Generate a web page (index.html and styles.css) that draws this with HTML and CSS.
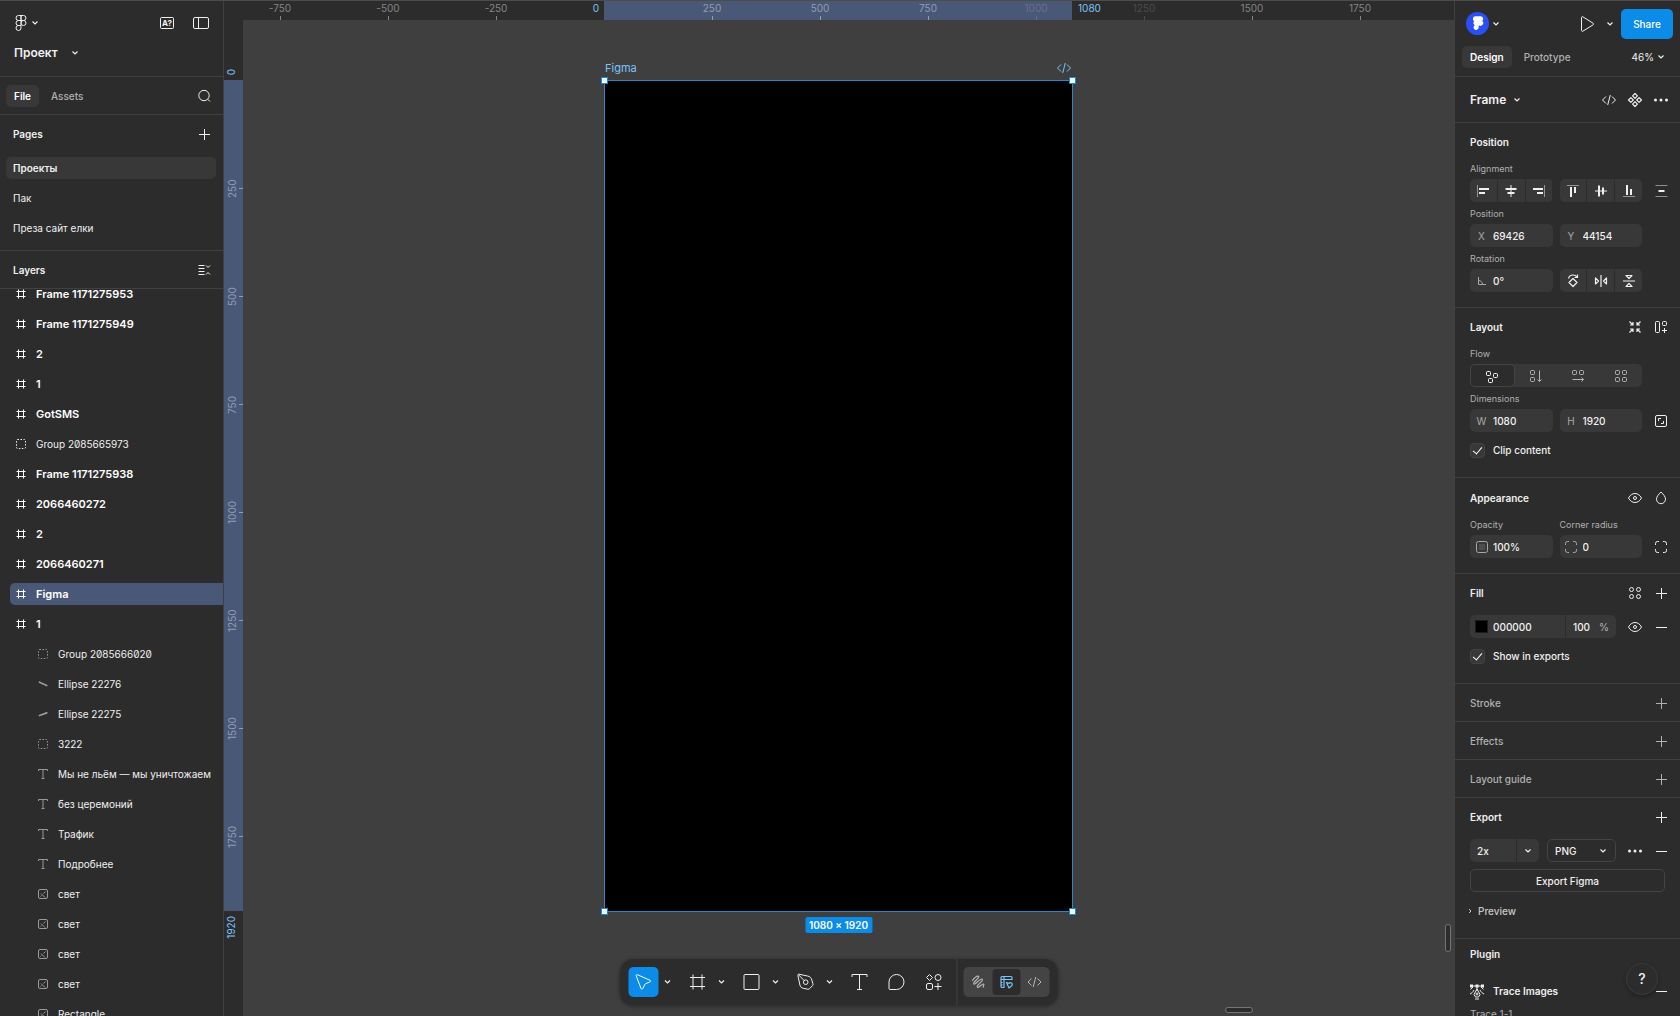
FILE: index.html
```html
<!DOCTYPE html>
<html lang="ru">
<head>
<meta charset="utf-8">
<meta name="viewport" content="width=device-width, initial-scale=1">
<title>Проект – Figma</title>
<link rel="stylesheet" href="styles.css">
</head>
<body>
<svg class="sprite" aria-hidden="true">
  <symbol id="i-chevron" viewBox="0 0 12 12"><path d="M3.500 4.500L6 7l2.500-2.500" stroke-width="1.200"/></symbol>
  <symbol id="i-chevron-right" viewBox="0 0 12 12"><path d="M5 4l2 2-2 2"/></symbol>
  <symbol id="i-figma" viewBox="0 0 24 24"><path d="M12 4.500H9.500a2.500 2.500 0 0 0 0 5H12zM12 4.500h2.500a2.500 2.500 0 0 1 0 5H12zM12 9.500H9.500a2.500 2.500 0 0 0 0 5H12zM12 14.500H9.500A2.500 2.500 0 1 0 12 17z"/><circle cx="14.500" cy="12" r="2.500"/></symbol>
  <symbol id="i-panel" viewBox="0 0 24 24"><rect x="4.500" y="6.500" width="15" height="11" rx="1.500"/><path d="M9.500 6.500v11"/></symbol>
  <symbol id="i-search" viewBox="0 0 24 24"><circle cx="12" cy="11.500" r="5.200"/><path d="M15.700 15.200l2.300 2.300"/></symbol>
  <symbol id="i-plus" viewBox="0 0 24 24"><path d="M12.500 7v11M7 12.500h11"/></symbol>
  <symbol id="i-minus" viewBox="0 0 24 24"><path d="M7 12.500h11"/></symbol>
  <symbol id="i-collapse" viewBox="0 0 24 24"><path d="M6.500 7.500h6M6.500 10.500h6M6.500 13.500h6M6.500 16.500h6M14 7.500l2 2 2-2M14 16.500l2-2 2 2"/></symbol>
  <symbol id="i-hash" viewBox="0 0 12 12"><path d="M3.500 1.500v9M8.500 1.500v9M1.500 3.500h9M1.500 8.500h9"/></symbol>
  <symbol id="i-group" viewBox="0 0 12 12"><rect x="1.500" y="1.500" width="9" height="9" rx="1" stroke-dasharray="1.500 1.500"/></symbol>
  <symbol id="i-ellipse-down" viewBox="0 0 12 12"><path d="M2.500 4.300l7.200 3.200" stroke-width="1.800" stroke-linecap="round"/></symbol>
  <symbol id="i-ellipse-up" viewBox="0 0 12 12"><path d="M2.500 7.500l7.200-2.700" stroke-width="1.800" stroke-linecap="round"/></symbol>
  <symbol id="i-text" viewBox="0 0 12 12"><path d="M1.500 3V1.500h9V3M6 1.500v9M4.500 10.500h3"/></symbol>
  <symbol id="i-image" viewBox="0 0 12 12"><rect x="1.500" y="1.500" width="9" height="9" rx="1.500"/><path d="M8 9.500L4 5.500M6.500 5.500l2-2M3.500 8.500l1-1"/></symbol>
  <symbol id="i-play" viewBox="0 0 24 24"><path d="M6.500 5.600v12.800c0 .9.600 1.200 1.300.8l10.200-6.300c.7-.4.700-1.300 0-1.700L7.800 4.800c-.7-.4-1.300-.1-1.300.8z"/></symbol>
  <symbol id="i-code" viewBox="0 0 24 24"><path d="M9 8.500L5.500 12 9 15.500M15 8.500l3.500 3.500-3.500 3.500M13.300 7l-2.600 10"/></symbol>
  <symbol id="i-component" viewBox="0 0 24 24"><path d="M12 5.500l2.400 2.400L12 10.300 9.600 7.900zM12 13.700l2.400 2.400L12 18.500l-2.400-2.400zM7.900 9.600l2.400 2.400-2.400 2.400L5.500 12zM16.100 9.600l2.400 2.400-2.400 2.400-2.400-2.400z" stroke-linejoin="round" stroke-width="1.200"/></symbol>
  <symbol id="i-dots" viewBox="0 0 24 24"><circle class="solid" cx="6.500" cy="12" r="1.500"/><circle class="solid" cx="12" cy="12" r="1.500"/><circle class="solid" cx="17.500" cy="12" r="1.500"/></symbol>
  <symbol id="i-al" viewBox="0 0 24 24"><path class="faint" d="M6.500 6v12"/><path class="thick" d="M8 10h10M8 14h6"/></symbol>
  <symbol id="i-ac" viewBox="0 0 24 24"><path d="M12 6v12"/><path class="thick" d="M6.500 10h11M8.500 14h7"/></symbol>
  <symbol id="i-ar" viewBox="0 0 24 24"><path class="faint" d="M17.500 6v12"/><path class="thick" d="M6 10h10M10 14h6"/></symbol>
  <symbol id="i-at" viewBox="0 0 24 24"><path class="faint" d="M6 6.500h12"/><path class="thick" d="M10 8v10M14 8v6"/></symbol>
  <symbol id="i-am" viewBox="0 0 24 24"><path d="M6 12h12"/><path class="thick" d="M10 6.500v11M14 8.500v7"/></symbol>
  <symbol id="i-ab" viewBox="0 0 24 24"><path class="faint" d="M6 17.500h12"/><path class="thick" d="M10 6v10M14 10v6"/></symbol>
  <symbol id="i-distribute" viewBox="0 0 24 24"><path class="faint" d="M6.500 6.500h12M6.500 17.500h12"/><path class="thick" d="M9.500 12h6"/></symbol>
  <symbol id="i-angle" viewBox="0 0 12 12"><path d="M2.500 2v7.500H10M2.500 5.500c2.300 0 4 1.700 4 4"/></symbol>
  <symbol id="i-rotate" viewBox="0 0 24 24"><path d="M12 9.500l4 4-4 4-4-4zM7.500 9.500C8 7.500 9.800 6 12 6c1.700 0 3.200.8 4 2M16.500 5.500v3h-3" stroke-linejoin="round" stroke-width="1.200"/></symbol>
  <symbol id="i-fliph" viewBox="0 0 24 24"><path d="M12 6v12M6.500 9v6l3-3zM17.500 9v6l-3-3z" stroke-linejoin="round" stroke-width="1.200"/></symbol>
  <symbol id="i-flipv" viewBox="0 0 24 24"><path d="M6 12h12M9 6.500h6l-3 3zM9 17.500h6l-3-3z" stroke-linejoin="round" stroke-width="1.200"/></symbol>
  <symbol id="i-fit" viewBox="0 0 24 24"><path d="M6.500 6.500l3.500 3.500M10 7v3H7M17.500 6.500L14 10M14 7v3h3M6.500 17.500L10 14M10 17v-3H7M17.500 17.500L14 14M14 17v-3h3" stroke-width="1.200"/></symbol>
  <symbol id="i-autolayout" viewBox="0 0 24 24"><rect x="6.500" y="6.500" width="4" height="11" rx="1"/><rect x="13.500" y="6.500" width="4" height="4" rx="1"/><path d="M15.500 13v5M13 15.500h5"/></symbol>
  <symbol id="i-flow-free" viewBox="0 0 24 24"><rect x="6.500" y="6.500" width="4" height="4" rx="1"/><rect x="13.500" y="8.500" width="4" height="4" rx="1"/><rect x="8.500" y="13.500" width="4" height="4" rx="1"/></symbol>
  <symbol id="i-flow-v" viewBox="0 0 24 24"><rect x="6.500" y="6.500" width="4" height="4" rx="1"/><rect x="6.500" y="13.500" width="4" height="4" rx="1"/><path d="M15.500 6.500v11M13.500 15.500l2 2 2-2"/></symbol>
  <symbol id="i-flow-h" viewBox="0 0 24 24"><rect x="6.500" y="6.500" width="4" height="4" rx="1"/><rect x="13.500" y="6.500" width="4" height="4" rx="1"/><path d="M6.500 15.500h11M15.500 13.500l2 2-2 2"/></symbol>
  <symbol id="i-flow-grid" viewBox="0 0 24 24"><rect x="6.500" y="6.500" width="4" height="4" rx="1"/><rect x="13.500" y="6.500" width="4" height="4" rx="1"/><rect x="6.500" y="13.500" width="4" height="4" rx="1"/><rect x="13.500" y="13.500" width="4" height="4" rx="1"/></symbol>
  <symbol id="i-ratio" viewBox="0 0 24 24"><rect x="6.500" y="6.500" width="11" height="11" rx="1.500"/><path d="M9.500 12V9.500H12M14.500 12v2.500H12"/></symbol>
  <symbol id="i-eye" viewBox="0 0 24 24"><path d="M5.500 12c1.500-2.900 3.800-4.500 6.500-4.500s5 1.600 6.500 4.500c-1.500 2.900-3.800 4.500-6.500 4.500S7 14.900 5.500 12z"/><circle cx="12" cy="12" r="1.500"/></symbol>
  <symbol id="i-drop" viewBox="0 0 24 24"><path d="M12 6c2.500 2.500 4.500 4.700 4.500 7.200a4.500 4.500 0 0 1-9 0C7.500 10.700 9.500 8.500 12 6z"/></symbol>
  <symbol id="i-opacity" viewBox="0 0 12 12"><rect x=".5" y=".5" width="11" height="11" rx="2"/><path class="tint" d="M3 3h6v6H3z"/></symbol>
  <symbol id="i-radius" viewBox="0 0 12 12"><path d="M.5 4V2.500a2 2 0 0 1 2-2H4M8 .5h1.500a2 2 0 0 1 2 2V4M11.500 8v1.500a2 2 0 0 1-2 2H8M4 11.500H2.500a2 2 0 0 1-2-2V8"/></symbol>
  <symbol id="i-styles" viewBox="0 0 24 24"><circle cx="8.500" cy="8.500" r="2"/><circle cx="15.500" cy="8.500" r="2"/><circle cx="8.500" cy="15.500" r="2"/><circle cx="15.500" cy="15.500" r="2"/></symbol>
  <symbol id="i-trace" viewBox="0 0 24 24"><path d="M6.500 7h11M12 8v4M9 11c-1 2-2.500 3.500-4 4M15 11c1 2 2.500 3.500 4 4M12 10l-3 5.500 1.500 2.500h3l1.500-2.500zM10 20h4M8 8L5.500 10.500M16 8l2.500 2.500"/><circle cx="12" cy="15" r="1"/><rect class="solid" x="5" y="5.500" width="3" height="3"/><rect class="solid" x="10.500" y="5.500" width="3" height="3"/><rect class="solid" x="16" y="5.500" width="3" height="3"/></symbol>
  <symbol id="i-cursor" viewBox="0 0 24 24"><path d="M4.700 5.900l4.900 12.700c.3.800 1.300.8 1.700 0l2-4.200c.1-.3.400-.5.700-.7l4.400-1.700c.8-.3.900-1.300.1-1.700L5.900 4.700c-.8-.3-1.500.4-1.200 1.200z" stroke-linejoin="round"/></symbol>
  <symbol id="i-frame" viewBox="0 0 24 24"><path d="M7.500 4.500v15M16.500 4.500v15M4.500 7.500h15M4.500 16.500h15"/></symbol>
  <symbol id="i-rect" viewBox="0 0 24 24"><rect x="4.500" y="4.500" width="15" height="15" rx="1"/></symbol>
  <symbol id="i-pen" viewBox="0 0 24 24"><path d="M5.500 4.200c-.8-.1-1.300.5-1.100 1.300l2 9.500c.4 1.800 1.600 3 3.400 3.300l4.500.9c.8.200 1.300 0 1.800-.5l3-3.200c.5-.6.600-1.100.3-1.800l-1-3.500C17.700 7.700 16.500 6.400 14 6zM5 4.800l5.600 5.700" stroke-linejoin="round"/><circle cx="12.200" cy="12.200" r="2.300"/></symbol>
  <symbol id="i-type" viewBox="0 0 24 24"><path d="M4.500 7V4.500h15V7M12 4.500v15M9.500 19.500h5"/></symbol>
  <symbol id="i-comment" viewBox="0 0 24 24"><path d="M12 4.500a7.500 7.500 0 1 1 0 15H5.500a1 1 0 0 1-1-1V12A7.500 7.500 0 0 1 12 4.500z"/></symbol>
  <symbol id="i-actions" viewBox="0 0 24 24"><path d="M8 4.500l3 3-3 3-3-3zM16.500 13v7M13 16.500h7" stroke-linejoin="round"/><circle cx="16.500" cy="7.500" r="3"/><rect x="5" y="13.500" width="6" height="6" rx="1.500"/></symbol>
  <symbol id="i-draw" viewBox="0 0 24 24"><path d="M6 10.500C7.500 8.500 10.500 5.500 12 6.300S8.500 11 7.500 12.500c-1 1.600 0 2.200 1.500 1 2.300-1.800 5.500-5.300 6.800-4.300S12 14 11 15.700c-.8 1.300.2 2.300 1.800 1 1.800-1.400 3.400-3.200 4.400-2.600s-1.200 2.100-.4 3.100" stroke-linecap="round" stroke-width="1.200"/></symbol>
  <symbol id="i-design" viewBox="0 0 24 24"><path d="M9.500 17.500h-2a1 1 0 0 1-1-1v-9a1 1 0 0 1 1-1h9a1 1 0 0 1 1 1v2h-8zM6.500 9.500h3M9.500 6.500v3M6.500 12.500h1.500M6.500 15h1.500M12 12.500l2.700.8c.8-1 2.600-.7 3 .5.400 1.300-.3 2-1 2.500L14.500 18z" stroke-linejoin="round" stroke-width="1.200"/></symbol>
</svg>

<div class="app">
  <aside class="left">
    <header class="left__bar">
      <button class="btn" aria-label="Main menu"><svg class="ic24"><use href="#i-figma"/></svg><svg class="ic12 tuck"><use href="#i-chevron"/></svg></button>
      <div class="left__tools">
        <button class="btn" aria-label="Missing fonts"><svg class="ic24" viewBox="0 0 24 24"><rect x="5.500" y="6.500" width="13" height="11" rx="1"/><text x="12" y="15" text-anchor="middle" class="glyph">A?</text></svg></button>
        <button class="btn" aria-label="Toggle panel"><svg class="ic24"><use href="#i-panel"/></svg></button>
      </div>
    </header>
    <div class="left__file"><button class="btn left__name">Проект <svg class="ic12"><use href="#i-chevron"/></svg></button></div>
    <nav class="left__tabs">
      <button class="tab tab--on">File</button>
      <button class="tab">Assets</button>
      <button class="btn push" aria-label="Search"><svg class="ic24"><use href="#i-search"/></svg></button>
    </nav>
    <section class="pages">
      <div class="head"><h2>Pages</h2><button class="btn push" aria-label="Add page"><svg class="ic24"><use href="#i-plus"/></svg></button></div>
      <ul>
        <li><a href="#" class="page page--on">Проекты</a></li>
        <li><a href="#" class="page">Пак</a></li>
        <li><a href="#" class="page">Преза сайт елки</a></li>
      </ul>
    </section>
    <div class="head head--line"><h2>Layers</h2><button class="btn push" aria-label="Collapse layers"><svg class="ic24"><use href="#i-collapse"/></svg></button></div>
    <div class="layers">
      <ul class="layers__list">
        <li class="layer layer--frame"><svg class="ic12"><use href="#i-hash"/></svg>Frame 1171275953</li>
        <li class="layer layer--frame"><svg class="ic12"><use href="#i-hash"/></svg>Frame 1171275949</li>
        <li class="layer layer--frame"><svg class="ic12"><use href="#i-hash"/></svg>2</li>
        <li class="layer layer--frame"><svg class="ic12"><use href="#i-hash"/></svg>1</li>
        <li class="layer layer--frame"><svg class="ic12"><use href="#i-hash"/></svg>GotSMS</li>
        <li class="layer"><svg class="ic12"><use href="#i-group"/></svg>Group 2085665973</li>
        <li class="layer layer--frame"><svg class="ic12"><use href="#i-hash"/></svg>Frame 1171275938</li>
        <li class="layer layer--frame"><svg class="ic12"><use href="#i-hash"/></svg>2066460272</li>
        <li class="layer layer--frame"><svg class="ic12"><use href="#i-hash"/></svg>2</li>
        <li class="layer layer--frame"><svg class="ic12"><use href="#i-hash"/></svg>2066460271</li>
        <li class="layer layer--frame layer--on"><svg class="ic12"><use href="#i-hash"/></svg>Figma</li>
        <li class="layer layer--frame"><svg class="ic12"><use href="#i-hash"/></svg>1</li>
        <li class="layer layer--child"><svg class="ic12"><use href="#i-group"/></svg>Group 2085666020</li>
        <li class="layer layer--child"><svg class="ic12"><use href="#i-ellipse-down"/></svg>Ellipse 22276</li>
        <li class="layer layer--child"><svg class="ic12"><use href="#i-ellipse-up"/></svg>Ellipse 22275</li>
        <li class="layer layer--child"><svg class="ic12"><use href="#i-group"/></svg>3222</li>
        <li class="layer layer--child"><svg class="ic12"><use href="#i-text"/></svg>Мы не льём — мы уничтожаем</li>
        <li class="layer layer--child"><svg class="ic12"><use href="#i-text"/></svg>без церемоний</li>
        <li class="layer layer--child"><svg class="ic12"><use href="#i-text"/></svg>Трафик</li>
        <li class="layer layer--child"><svg class="ic12"><use href="#i-text"/></svg>Подробнее</li>
        <li class="layer layer--child"><svg class="ic12"><use href="#i-image"/></svg>свет</li>
        <li class="layer layer--child"><svg class="ic12"><use href="#i-image"/></svg>свет</li>
        <li class="layer layer--child"><svg class="ic12"><use href="#i-image"/></svg>свет</li>
        <li class="layer layer--child"><svg class="ic12"><use href="#i-image"/></svg>свет</li>
        <li class="layer layer--child"><svg class="ic12"><use href="#i-image"/></svg>Rectangle</li>
      </ul>
    </div>
  </aside>

  <main class="work">
    <div class="ruler ruler--x">
      <div class="ruler__band"><b class="ruler__from">0</b><b class="ruler__to">1080</b></div>
      <span>-750</span><span>-500</span><span>-250</span><span></span><span>250</span><span>500</span><span>750</span><span class="dim">1000</span><span class="dim">1250</span><span>1500</span><span>1750</span>
    </div>
    <div class="ruler ruler--y">
      <div class="ruler__band"><b class="ruler__from">0</b><b class="ruler__to">1920</b></div>
      <span>250</span><span>500</span><span>750</span><span>1000</span><span>1250</span><span>1500</span><span>1750</span>
    </div>
    <div class="canvas">
      <div class="frame">
        <div class="frame__head"><span>Figma</span><svg class="ic24"><use href="#i-code"/></svg></div>
        <i class="handle handle--tl"></i><i class="handle handle--tr"></i><i class="handle handle--bl"></i><i class="handle handle--br"></i>
        <div class="frame__size">1080 × 1920</div>
      </div>
      <i class="thumb thumb--y"></i>
      <i class="thumb thumb--x"></i>
    </div>
    <div class="toolbar">
      <div class="tools">
        <div class="tool"><button class="tool__btn tool__btn--on" aria-label="Move"><svg class="ic24"><use href="#i-cursor"/></svg></button><button class="tool__more" aria-label="Move tools"><svg class="ic12"><use href="#i-chevron"/></svg></button></div>
        <div class="tool"><button class="tool__btn" aria-label="Frame"><svg class="ic24"><use href="#i-frame"/></svg></button><button class="tool__more" aria-label="Region tools"><svg class="ic12"><use href="#i-chevron"/></svg></button></div>
        <div class="tool"><button class="tool__btn" aria-label="Rectangle"><svg class="ic24"><use href="#i-rect"/></svg></button><button class="tool__more" aria-label="Shape tools"><svg class="ic12"><use href="#i-chevron"/></svg></button></div>
        <div class="tool"><button class="tool__btn" aria-label="Pen"><svg class="ic24"><use href="#i-pen"/></svg></button><button class="tool__more" aria-label="Creation tools"><svg class="ic12"><use href="#i-chevron"/></svg></button></div>
        <div class="trio">
          <button class="tool__btn" aria-label="Text"><svg class="ic24"><use href="#i-type"/></svg></button>
          <button class="tool__btn" aria-label="Comment"><svg class="ic24"><use href="#i-comment"/></svg></button>
          <button class="tool__btn" aria-label="Actions"><svg class="ic24"><use href="#i-actions"/></svg></button>
        </div>
      </div>
      <div class="modes">
        <div class="modes__box">
          <button class="mode" aria-label="Draw"><svg class="ic24"><use href="#i-draw"/></svg></button>
          <button class="mode mode--on" aria-label="Design"><svg class="ic24"><use href="#i-design"/></svg></button>
          <button class="mode" aria-label="Dev Mode"><svg class="ic24"><use href="#i-code"/></svg></button>
        </div>
      </div>
    </div>
  </main>

  <aside class="right">
    <header class="right__bar">
      <button class="btn user" aria-label="Account"><svg class="avatar" viewBox="0 0 24 24"><circle class="avatar__bg" cx="12" cy="12" r="12"/><path class="avatar__logo" d="M9.300 4.500h5.900a2.700 2.700 0 0 1 1.700 4.800 2.700 2.700 0 0 1-3.600 4.400v2.300a2.700 2.700 0 1 1-4.200-2.200 2.600 2.600 0 0 1-.6-4.200 2.800 2.800 0 0 1 .8-5.100z"/></svg><svg class="ic12"><use href="#i-chevron"/></svg></button>
      <button class="btn push" aria-label="Present"><svg class="ic24"><use href="#i-play"/></svg></button>
      <button class="btn present-more" aria-label="Present options"><svg class="ic12"><use href="#i-chevron"/></svg></button>
      <button class="share">Share</button>
    </header>
    <nav class="right__tabs">
      <button class="tab tab--on">Design</button>
      <button class="tab">Prototype</button>
      <button class="btn zoom push">46% <svg class="ic12"><use href="#i-chevron"/></svg></button>
    </nav>
    <div class="kind">
      <button class="btn kind__name">Frame <svg class="ic12"><use href="#i-chevron"/></svg></button>
      <div class="acts">
        <button class="btn" aria-label="Dev"><svg class="ic24"><use href="#i-code"/></svg></button>
        <button class="btn" aria-label="Create component"><svg class="ic24"><use href="#i-component"/></svg></button>
        <button class="btn" aria-label="More"><svg class="ic24"><use href="#i-dots"/></svg></button>
      </div>
    </div>

    <section class="sec">
      <div class="sec__head"><h2>Position</h2></div>
      <div class="grid">
        <p class="lab wide">Alignment</p>
        <div class="seg"><button aria-label="Align left"><svg class="ic24"><use href="#i-al"/></svg></button><button aria-label="Align centers"><svg class="ic24"><use href="#i-ac"/></svg></button><button aria-label="Align right"><svg class="ic24"><use href="#i-ar"/></svg></button></div>
        <div class="seg"><button aria-label="Align top"><svg class="ic24"><use href="#i-at"/></svg></button><button aria-label="Align middles"><svg class="ic24"><use href="#i-am"/></svg></button><button aria-label="Align bottom"><svg class="ic24"><use href="#i-ab"/></svg></button></div>
        <button class="btn" aria-label="Distribute"><svg class="ic24"><use href="#i-distribute"/></svg></button>
      </div>
      <div class="grid">
        <p class="lab wide">Position</p>
        <label class="field"><span>X</span><input value="69426"></label>
        <label class="field"><span>Y</span><input value="44154"></label>
      </div>
      <div class="grid">
        <p class="lab wide">Rotation</p>
        <label class="field" aria-label="Rotation"><span><svg class="ic12"><use href="#i-angle"/></svg></span><input value="0°"></label>
        <div class="seg"><button aria-label="Rotate 90"><svg class="ic24"><use href="#i-rotate"/></svg></button><button aria-label="Flip horizontal"><svg class="ic24"><use href="#i-fliph"/></svg></button><button aria-label="Flip vertical"><svg class="ic24"><use href="#i-flipv"/></svg></button></div>
      </div>
    </section>

    <section class="sec">
      <div class="sec__head"><h2>Layout</h2><div class="acts"><button class="btn" aria-label="Resize to fit"><svg class="ic24"><use href="#i-fit"/></svg></button><button class="btn" aria-label="Auto layout"><svg class="ic24"><use href="#i-autolayout"/></svg></button></div></div>
      <div class="grid">
        <p class="lab wide">Flow</p>
        <div class="flow"><button class="flow--on" aria-label="Free form"><svg class="ic24"><use href="#i-flow-free"/></svg></button><button aria-label="Vertical"><svg class="ic24"><use href="#i-flow-v"/></svg></button><button aria-label="Horizontal"><svg class="ic24"><use href="#i-flow-h"/></svg></button><button aria-label="Grid"><svg class="ic24"><use href="#i-flow-grid"/></svg></button></div>
      </div>
      <div class="grid">
        <p class="lab wide">Dimensions</p>
        <label class="field"><span>W</span><input value="1080"></label>
        <label class="field"><span>H</span><input value="1920"></label>
        <button class="btn" aria-label="Lock aspect ratio"><svg class="ic24"><use href="#i-ratio"/></svg></button>
      </div>
      <label class="check"><input type="checkbox" checked>Clip content</label>
    </section>

    <section class="sec sec--single">
      <div class="sec__head"><h2>Appearance</h2><div class="acts"><button class="btn" aria-label="Visibility"><svg class="ic24"><use href="#i-eye"/></svg></button><button class="btn" aria-label="Blend mode"><svg class="ic24"><use href="#i-drop"/></svg></button></div></div>
      <div class="grid">
        <label class="lab" for="opacity">Opacity</label><label class="lab two" for="radius">Corner radius</label>
        <div class="field"><span><svg class="ic12"><use href="#i-opacity"/></svg></span><input id="opacity" value="100%"></div>
        <div class="field"><span><svg class="ic12"><use href="#i-radius"/></svg></span><input id="radius" value="0"></div>
        <button class="btn" aria-label="Individual corners"><svg class="ic12"><use href="#i-radius"/></svg></button>
      </div>
    </section>

    <section class="sec">
      <div class="sec__head"><h2>Fill</h2><div class="acts"><button class="btn" aria-label="Styles"><svg class="ic24"><use href="#i-styles"/></svg></button><button class="btn" aria-label="Add fill"><svg class="ic24"><use href="#i-plus"/></svg></button></div></div>
      <div class="line">
        <div class="paint"><i class="swatch"></i><input class="hex" aria-label="Fill colour" value="000000"><label class="pct"><input aria-label="Fill opacity" value="100"><span>%</span></label></div>
        <div class="acts"><button class="btn" aria-label="Toggle fill"><svg class="ic24"><use href="#i-eye"/></svg></button><button class="btn" aria-label="Remove fill"><svg class="ic24"><use href="#i-minus"/></svg></button></div>
      </div>
      <label class="check"><input type="checkbox" checked>Show in exports</label>
    </section>

    <section class="sec sec--off"><div class="sec__head"><h2>Stroke</h2><div class="acts"><button class="btn" aria-label="Add stroke"><svg class="ic24"><use href="#i-plus"/></svg></button></div></div></section>
    <section class="sec sec--off"><div class="sec__head"><h2>Effects</h2><div class="acts"><button class="btn" aria-label="Add effect"><svg class="ic24"><use href="#i-plus"/></svg></button></div></div></section>
    <section class="sec sec--off"><div class="sec__head"><h2>Layout guide</h2><div class="acts"><button class="btn" aria-label="Add layout guide"><svg class="ic24"><use href="#i-plus"/></svg></button></div></div></section>

    <section class="sec">
      <div class="sec__head"><h2>Export</h2><div class="acts"><button class="btn" aria-label="Add export"><svg class="ic24"><use href="#i-plus"/></svg></button></div></div>
      <div class="line">
        <div class="export">
          <div class="scale"><input aria-label="Scale" value="2x"><button aria-label="Scale presets"><svg class="ic12"><use href="#i-chevron"/></svg></button></div>
          <div class="format"><select aria-label="Format"><option>PNG</option><option>JPG</option><option>SVG</option></select><svg class="ic12"><use href="#i-chevron"/></svg></div>
        </div>
        <div class="acts"><button class="btn" aria-label="Export options"><svg class="ic24"><use href="#i-dots"/></svg></button><button class="btn" aria-label="Remove export"><svg class="ic24"><use href="#i-minus"/></svg></button></div>
      </div>
      <button class="export-btn">Export Figma</button>
      <button class="btn preview"><svg class="ic12"><use href="#i-chevron-right"/></svg>Preview</button>
    </section>

    <section class="plugin">
      <h2>Plugin</h2>
      <div class="plugin__row"><svg class="ic24"><use href="#i-trace"/></svg><span>Trace Images</span><button class="btn push" aria-label="Remove plugin"><svg class="ic24"><use href="#i-minus"/></svg></button></div>
      <p>Trace 1-1</p>
    </section>
    <button class="help" aria-label="Help">?</button>
  </aside>
</div>
</body>
</html>
```
FILE: styles.css
```css
:root {
  --panel: #2c2c2c;
  --line: #404040;
  --field: #383838;
  --canvas: #3f3f3f;
  --text: #f0f0f0;
  --muted: #b0b0b0;
  --blue: #0c8ce9;
  --select: #4a5878;
  --sky: #7cc4f8;
}

* { box-sizing: border-box; }

body {
  margin: 0;
  background: var(--panel);
  color: var(--text);
  font: 400 10px/16px Inter, sans-serif;
}

h2, p, ul { margin: 0; padding: 0; }
h2 { font: inherit; font-weight: 600; }
ul { list-style: none; }
a { color: inherit; text-decoration: none; }

button, input, select {
  margin: 0;
  padding: 0;
  border: 0;
  background: none;
  color: inherit;
  font: inherit;
}

input { min-width: 0; outline: 0; }

svg {
  display: block;
  flex: none;
  fill: none;
  stroke: currentColor;
}

.sprite { position: absolute; width: 0; height: 0; }
.solid { fill: currentColor; stroke: none; }
.tint { fill: currentColor; stroke: none; opacity: 0.2; }
.faint { opacity: 0.5; }
.thick { stroke-width: 2; }
.ic24 { width: 24px; height: 24px; }
.ic12 { width: 12px; height: 12px; }
.tuck { margin-left: -4px; }
.glyph { fill: currentColor; stroke: none; font: 700 8px Inter, sans-serif; }

.btn { display: flex; align-items: center; justify-content: center; }
.push { margin-left: auto; }

.app {
  display: grid;
  grid-template-columns: 224px minmax(0, 1fr) 226px;
  height: 100vh;
  overflow: hidden;
  border-top: 1px solid #4c4c4c;
}

.tab {
  height: 22px;
  padding: 0 8px;
  border-radius: 5px;
  color: var(--muted);
  font-weight: 500;
}
.tab--on { background: var(--field); color: #fff; font-weight: 600; }

/* Left panel */
.left {
  display: flex;
  flex-direction: column;
  min-height: 0;
  border-right: 1px solid var(--line);
}
.left__bar { display: flex; justify-content: space-between; height: 44px; padding: 0 10px 0 9px; }
.left__tools { display: flex; gap: 10px; }
.left__file { height: 32px; padding-left: 14px; border-bottom: 1px solid var(--line); }
.left__name { gap: 11px; font-size: 12px; font-weight: 600; }
.left__tabs {
  display: flex;
  align-items: center;
  gap: 4px;
  height: 38px;
  padding: 0 7px 0 6px;
  border-bottom: 1px solid var(--line);
}
.head { display: flex; align-items: center; height: 38px; padding: 0 7px 0 13px; }
.head--line { border-bottom: 1px solid var(--line); }
.pages { padding-bottom: 7px; border-bottom: 1px solid var(--line); }
.pages li { padding: 4px 7px 4px 6px; }
.page { display: block; padding: 3px 7px; border-radius: 5px; }
.page--on { background: var(--field); font-weight: 600; }
.layers { flex: 1; min-height: 0; overflow: hidden; }
.layers__list { margin-top: -10px; }
.layer {
  display: flex;
  align-items: center;
  gap: 9px;
  height: 22px;
  margin: 4px 0 8px 10px;
  padding-left: 5px;
  white-space: nowrap;
  font-variant-numeric: slashed-zero;
  border-radius: 5px 0 0 5px;
}
.layer--frame { font-size: 11px; font-weight: 600; color: #fff; font-variant-numeric: normal; }
.layer--on { background: var(--select); }
.layer--child { padding-left: 27px; }
.layer--child svg { color: #999; }

/* Canvas */
.work {
  position: relative;
  display: grid;
  grid-template-columns: 19px minmax(0, 1fr);
  grid-template-rows: 19px minmax(0, 1fr);
  background: var(--canvas);
}
.ruler { position: relative; display: flex; overflow: hidden; background: var(--panel); color: #858585; }
.ruler span { position: relative; flex: none; display: flex; align-items: center; justify-content: center; }
.ruler span:not(:empty)::after { content: ""; position: absolute; background: currentColor; }
.ruler .dim { opacity: 0.35; }
.ruler__band { position: absolute; background: var(--select); }
.ruler__band b { position: absolute; color: var(--sky); font-weight: 400; }
.ruler--x { grid-column: 1 / -1; padding-left: 2px; }
.ruler--x span { width: 108px; height: 14px; }
.ruler--x span::after { left: 54px; top: 15px; width: 1px; height: 4px; }
.ruler--x .ruler__band { left: 380px; width: 468px; top: 0; bottom: 0; }
.ruler--x .ruler__from { right: 100%; padding-right: 5px; line-height: 14px; }
.ruler--x .ruler__to { left: 100%; padding-left: 6px; line-height: 14px; }
.ruler--y { flex-direction: column; padding-top: 115px; color: #929cb0; }
.ruler--y span { width: 15px; height: 108px; writing-mode: vertical-rl; transform: rotate(180deg); }
.ruler--y span::after { left: -4px; top: 54px; width: 4px; height: 1px; }
.ruler--y .ruler__band { top: 60px; height: 831px; left: 0; right: 0; }
.ruler--y .ruler__band b { left: 0; width: 15px; line-height: 15px; writing-mode: vertical-rl; transform: rotate(180deg); }
.ruler--y .ruler__from { bottom: 100%; padding-top: 5px; }
.ruler--y .ruler__to { top: 100%; padding-bottom: 5px; }
.ruler--x span:nth-child(n+6):nth-child(-n+9) { color: #929cb0; }

.canvas { position: relative; overflow: hidden; }
.frame {
  position: absolute;
  left: 361px;
  top: 60px;
  width: 469px;
  height: 832px;
  border: 1px solid #2a87c8;
  background: #000;
}
.frame__head {
  position: absolute;
  left: 0;
  right: -4px;
  bottom: 100%;
  display: flex;
  align-items: center;
  justify-content: space-between;
  height: 26px;
  color: var(--sky);
  font-size: 11px;
}
.frame__size {
  position: absolute;
  left: 50%;
  top: 100%;
  margin-top: 6px;
  padding: 0 4px;
  transform: translateX(-50%);
  border-radius: 2px;
  background: var(--blue);
  color: #fff;
  font-weight: 600;
  white-space: nowrap;
}
.handle { position: absolute; width: 7px; height: 7px; border: 1px solid var(--blue); background: #fff; }
.handle--tl { left: -4px; top: -4px; }
.handle--tr { right: -4px; top: -4px; }
.handle--bl { left: -4px; bottom: -4px; }
.handle--br { right: -4px; bottom: -4px; }
.thumb { position: absolute; border: 1px solid #757575; border-radius: 3px; background: var(--panel); }
.thumb--y { right: 3px; bottom: 64px; width: 6px; height: 28px; }
.thumb--x { right: 201px; bottom: 3px; width: 28px; height: 6px; }

.toolbar {
  position: absolute;
  left: 50%;
  bottom: 11px;
  transform: translateX(-50%);
  display: flex;
  height: 46px;
  border-radius: 13px;
  background: var(--panel);
  box-shadow: 0 1px 4px rgba(0, 0, 0, 0.4);
}
.tools { display: flex; align-items: center; gap: 6px; padding: 0 8px; }
.tool { display: flex; }
.tool__btn { display: grid; place-items: center; width: 30px; height: 30px; border-radius: 5px; }
.tool__btn--on { background: var(--blue); color: #fff; }
.tool__more { display: grid; place-items: center; width: 18px; }
.trio { display: flex; gap: 7px; }
.modes { display: flex; align-items: center; padding: 0 8px 0 6px; border-left: 1px solid var(--line); }
.modes__box { display: flex; padding: 2px 1px; border-radius: 5px; background: #444; }
.mode { display: grid; place-items: center; width: 28px; height: 26px; border-radius: 4px; color: #b5b5b5; }
.mode--on { background: var(--panel); color: var(--sky); }

/* Right panel */
.right {
  position: relative;
  display: flex;
  flex-direction: column;
  min-height: 0;
  overflow: hidden;
  border-left: 1px solid var(--line);
}
.right > * { flex: none; }
.right__bar { display: flex; align-items: center; height: 45px; padding: 0 7px 0 11px; }
.user { gap: 1px; }
.avatar { width: 23px; height: 23px; stroke: none; }
.avatar__bg { fill: #2a50f5; }
.avatar__logo { fill: #fff; }
.present-more { width: 22px; }
.share { width: 52px; height: 30px; border-radius: 5px; background: var(--blue); color: #fff; font-weight: 500; }
.right__tabs { display: flex; gap: 4px; height: 31px; padding: 0 6px 8px 7px; border-bottom: 1px solid var(--line); }
.zoom { gap: 1px; padding-right: 7px; }
.kind { display: flex; align-items: center; justify-content: space-between; height: 46px; padding: 0 7px 0 15px; border-bottom: 1px solid var(--line); }
.kind__name { gap: 5px; font-size: 12px; font-weight: 600; }
.acts { display: flex; gap: 2px; margin-left: auto; }

.sec { padding: 0 7px 12px 15px; border-bottom: 1px solid var(--line); }
.sec--single { padding-top: 1px; padding-bottom: 15px; }
.sec--off { padding-bottom: 0; color: var(--muted); }
.sec--off h2 { font-weight: 500; }
.sec__head { display: flex; align-items: center; height: 37px; }
.grid {
  display: grid;
  grid-template-columns: minmax(0, 1fr) minmax(0, 1fr) 24px;
  grid-template-rows: 19px 23px;
  column-gap: 7px;
  margin-bottom: 3px;
}
.sec--single .grid { margin-bottom: 0; }
.lab { line-height: 18px; color: var(--muted); font-size: 9px; }
.wide { grid-column: 1 / -1; }
.two { grid-column: 2 / -1; }
.field { display: flex; align-items: center; border-radius: 5px; background: var(--field); }
.field span { flex: none; display: grid; place-items: center; width: 23px; color: #a8a8a8; }
.field input { width: 100%; font-weight: 500; }
.seg { display: flex; gap: 1px; border-radius: 5px; overflow: hidden; }
.seg button { flex: 1; display: grid; place-items: center; height: 23px; background: var(--field); }
.flow { grid-column: 1 / 3; display: flex; border-radius: 5px; background: var(--field); }
.flow button { flex: 1; display: grid; place-items: center; height: 23px; color: #b5b5b5; }
.flow .flow--on { border: 1px solid #444; border-radius: 5px; background: var(--panel); color: #fff; }
.check { display: flex; align-items: center; gap: 8px; height: 30px; font-weight: 500; }
.check input { appearance: none; display: grid; place-items: center; width: 15px; height: 15px; border: 1px solid #444; border-radius: 4px; background: var(--field); }
.check input:checked::after { content: ""; width: 4px; height: 8px; margin-bottom: 2px; border: solid #fff; border-width: 0 1px 1px 0; transform: rotate(40deg); }

.line { display: flex; align-items: center; height: 23px; margin: 4px 0 3px; }
.paint { display: flex; align-items: center; width: 146px; height: 23px; border-radius: 5px; background: var(--field); font-weight: 500; }
.swatch { width: 13px; height: 13px; margin: 0 5px; border: 1px solid #1c1c1c; background: #000; }
.hex { flex: 1; }
.pct { display: flex; align-items: center; justify-content: space-between; width: 51px; height: 23px; padding: 0 7px; border-left: 1px solid var(--panel); }
.pct input { width: 22px; }
.pct span { color: #a8a8a8; }
.export { display: grid; grid-template-columns: 69px 69px; gap: 8px; }
.scale { display: flex; height: 23px; border-radius: 5px; background: var(--field); font-weight: 500; }
.scale input { flex: 1; padding-left: 7px; }
.scale button { display: grid; place-items: center; width: 23px; border-left: 1px solid var(--panel); }
.format { display: flex; align-items: center; height: 23px; padding-right: 6px; border: 1px solid #444; border-radius: 5px; font-weight: 500; }
.format select { appearance: none; flex: 1; padding-left: 7px; outline: 0; }
.export-btn { display: block; width: 195px; height: 23px; margin: 7px 0 4px; border: 1px solid #444; border-radius: 5px; font-weight: 500; }
.preview { height: 30px; margin-left: -6px; gap: 2px; color: #c8c8c8; font-weight: 500; }
.plugin { padding: 0 7px 0 15px; }
.plugin h2 { height: 37px; line-height: 30px; }
.plugin__row { display: flex; align-items: center; height: 30px; font-weight: 600; }
.plugin__row > svg { margin: 0 4px 0 -5px; }
.plugin p { color: var(--muted); }
.help {
  position: absolute;
  right: 23px;
  bottom: 22px;
  width: 30px;
  height: 30px;
  border-radius: 50%;
  background: var(--panel);
  box-shadow: 0 0 0 1px #3a3a3a, 0 2px 5px rgba(0, 0, 0, 0.4);
  font-size: 14px;
  font-weight: 500;
}
```
